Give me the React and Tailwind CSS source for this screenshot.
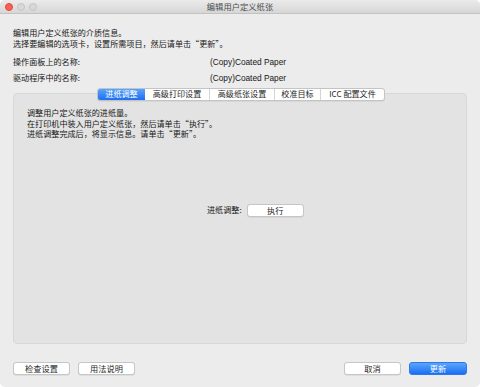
const FONT = { fontFamily: '"Noto Sans CJK SC", "Liberation Sans", sans-serif' };
const LATIN = { fontFamily: '"Liberation Sans", "Noto Sans CJK SC", sans-serif' };

const TABS = ["进纸调整", "高级打印设置", "高级纸张设置", "校准目标", "ICC 配置文件"];
const TAB_WIDTHS = ["w-[47px]", "w-[64px]", "w-[65px]", "w-[46px]", "w-[64px]"];

function MiniButton({ children, primary = false }) {
  if (primary) {
    return (
      <button className="w-[58px] h-[13px] rounded-[3px] bg-gradient-to-b from-[#5aa6fc] to-[#1a6cf3] border border-[#2d78ee] text-white text-[8.2px] leading-none flex items-center justify-center">
        {children}
      </button>
    );
  }
  return (
    <button className="w-[57px] h-[13px] rounded-[3px] bg-white border border-[#c6c6c6] shadow-[0_0.5px_0.5px_rgba(0,0,0,0.12)] text-[#1e1e1e] text-[8.2px] leading-none flex items-center justify-center">
      {children}
    </button>
  );
}

export default function App() {
  return (
    <div
      className="w-[480px] h-[387px] bg-[#ececec] rounded-[5px] overflow-hidden flex flex-col text-[#161616]"
      style={FONT}
    >
      {/* title bar */}
      <div className="relative h-[14px] shrink-0 bg-gradient-to-b from-[#ebebeb] to-[#d6d6d6] border-b border-[#c2c2c2] flex items-center justify-center">
        <div className="absolute left-[5px] top-[3px] flex gap-[4px]">
          <span className="w-[8px] h-[8px] rounded-full bg-[#fc5f57] border border-[#e2463f]" />
          <span className="w-[8px] h-[8px] rounded-full bg-[#d8d8d8] border border-[#c4c4c4]" />
          <span className="w-[8px] h-[8px] rounded-full bg-[#d8d8d8] border border-[#c4c4c4]" />
        </div>
        <span className="text-[8.3px] leading-none text-[#4d4d4d]">编辑用户定义纸张</span>
      </div>

      <div className="flex-1 flex flex-col px-[13px]">
        <div className="mt-[14px] text-[8.1px] leading-[10.5px]">
          <p>编辑用户定义纸张的介质信息。</p>
          <p>选择要编辑的选项卡，设置所需项目，然后请单击“更新”。</p>
        </div>

        <div className="mt-[8px] flex flex-col gap-[5.5px] text-[8.1px] leading-[10.5px]">
          <div className="flex">
            <span className="w-[197px]">操作面板上的名称:</span>
            <span className="text-[8.3px]" style={LATIN}>(Copy)Coated Paper</span>
          </div>
          <div className="flex">
            <span className="w-[197px]">驱动程序中的名称:</span>
            <span className="text-[8.3px]" style={LATIN}>(Copy)Coated Paper</span>
          </div>
        </div>

        {/* tabs */}
        <div className="relative z-10 mt-[4.5px] flex justify-start pl-[84px]">
          <div className="flex h-[13px] rounded-[3px] border border-[#c4c4c4] bg-white overflow-hidden shadow-[0_0.5px_0.5px_rgba(0,0,0,0.1)]">
            {TABS.map((t, i) => (
              <div
                key={t}
                className={`${TAB_WIDTHS[i]} h-full flex items-center justify-center text-[8.1px] leading-none ${
                  i === 0
                    ? "bg-gradient-to-b from-[#59a4fb] to-[#1d6ef2] text-white"
                    : "text-[#1e1e1e] border-l border-[#d4d4d4]"
                } ${i === 1 ? "border-l-0" : ""}`}
              >
                {t}
              </div>
            ))}
          </div>
        </div>

        {/* panel */}
        <div className="-mt-[8px] h-[251px] rounded-[4px] bg-[#e3e3e3] border border-[#d8d8d8] flex flex-col pl-[13px] pt-[14px]">
          <div className="text-[8.1px] leading-[10.5px]">
            <p>调整用户定义纸张的进纸量。</p>
            <p>在打印机中装入用户定义纸张，然后请单击“执行”。</p>
            <p>进纸调整完成后，将显示信息。请单击“更新”。</p>
          </div>
          <div className="mt-[64px] ml-[180px] flex items-center gap-[5px]">
            <span className="text-[8.1px] leading-none">进纸调整:</span>
            <MiniButton>执行</MiniButton>
          </div>
        </div>

        {/* bottom buttons */}
        <div className="mt-[18px] flex items-center">
          <div className="flex gap-[8px]">
            <MiniButton>检查设置</MiniButton>
            <MiniButton>用法说明</MiniButton>
          </div>
          <div className="ml-auto flex gap-[8px]">
            <MiniButton>取消</MiniButton>
            <MiniButton primary>更新</MiniButton>
          </div>
        </div>
      </div>
    </div>
  );
}
